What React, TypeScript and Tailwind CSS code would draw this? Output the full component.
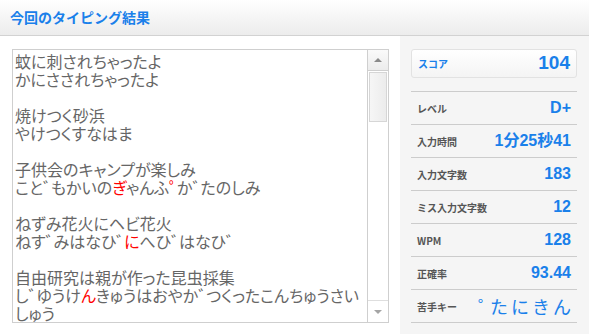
import React from 'react'

type Seg = { t: string; red?: boolean }

const lines: Seg[][] = [
  [{ t: '蚊に刺されちゃったよ' }],
  [{ t: 'かにさされちゃったよ' }],
  [],
  [{ t: '焼けつく砂浜' }],
  [{ t: 'やけつくすなはま' }],
  [],
  [{ t: '子供会のキャンプが楽しみ' }],
  [{ t: 'こと゛もかいの' }, { t: 'ぎ', red: true }, { t: 'ゃんふ' }, { t: '゜', red: true }, { t: 'か゛たのしみ' }],
  [],
  [{ t: 'ねずみ花火にヘビ花火' }],
  [{ t: 'ねす゛みはなひ゛' }, { t: 'に', red: true }, { t: 'へひ゛はなひ゛' }],
  [],
  [{ t: '自由研究は親が作った昆虫採集' }],
  [{ t: 'し゛ゆうけ' }, { t: 'ん', red: true }, { t: 'きゅうはおやか゛つくったこんちゅうさい' }],
  [{ t: 'しゅう' }],
]

const stats = [
  { label: 'レベル', value: 'D+' },
  { label: '入力時間', value: '1分25秒41' },
  { label: '入力文字数', value: '183' },
  { label: 'ミス入力文字数', value: '12' },
  { label: 'WPM', value: '128' },
  { label: '正確率', value: '93.44' },
]

// the spacing marks ゛ ゜ take far less room in the reference than a full cell
function Marks({ text }: { text: string }) {
  const parts = text.split(/([゛゜])/)
  return (
    <>
      {parts.map((p, i) =>
        p === '゛' || p === '゜' ? (
          <span key={i} className="-mr-[8px]">
            {p}
          </span>
        ) : (
          p
        )
      )}
    </>
  )
}

function Scrollbar() {
  return (
    <div className="flex w-[21px] flex-col border-l border-[#cfcfcf] bg-white">
      <div className="flex h-[21px] items-center justify-center border-b border-[#cfcfcf] bg-gradient-to-b from-[#fafafa] to-[#ececec]">
        <div className="h-0 w-0 border-x-[4px] border-b-[4px] border-x-transparent border-b-[#8a8a8a]" />
      </div>
      <div className="mx-[1px] mt-[1px] h-[50px] border border-[#d6d6d6] bg-gradient-to-r from-[#f6f6f6] to-[#ececec]" />
      <div className="flex-1" />
      <div className="flex h-[22px] items-center justify-center border-t border-[#dedede] bg-white">
        <div className="h-0 w-0 border-x-[4px] border-t-[4px] border-x-transparent border-t-[#a5a5a5]" />
      </div>
    </div>
  )
}

export default function App() {
  return (
    <div className="flex h-[334px] w-[589px] flex-col overflow-hidden bg-white font-['Liberation_Sans','Noto_Sans_CJK_JP',sans-serif]">
      {/* Header */}
      <div className="flex h-[36px] shrink-0 items-center border-b border-[#d2d2d2] bg-gradient-to-b from-white to-[#ececec] pl-[10px]">
        <h1 className="text-[14px] font-bold text-[#1a80ea] font-['Noto_Sans_CJK_JP',sans-serif]">今回のタイピング結果</h1>
      </div>

      <div className="flex flex-1">
        {/* Typed text */}
        <div className="w-[400px] pl-[12px] pt-[13px]">
          <div className="flex h-[274px] w-[377px] border border-[#cfcfcf]">
            <div className="flex-1 overflow-hidden pl-[2px] pt-[2px] text-[16px] leading-[18px] text-[#666] [font-feature-settings:'palt'] font-['Noto_Sans_CJK_JP',sans-serif]">
              {lines.map((segs, i) => (
                <div key={i} className="h-[18px] whitespace-pre">
                  {segs.map((s, j) => (
                    <span key={j} className={s.red ? 'text-[#f00]' : ''}>
                      <Marks text={s.t} />
                    </span>
                  ))}
                </div>
              ))}
            </div>
            <Scrollbar />
          </div>
        </div>

        {/* Stats */}
        <div className="flex-1 bg-[#f5f5f5] pl-[11px] pr-[12px] pt-[13px]">
          <div className="flex h-[29px] items-center justify-between rounded-[3px] border border-[#e2e2e2] bg-gradient-to-b from-white to-[#f4f4f4] pl-[6px] pr-[6px]">
            <span className="text-[10px] font-bold text-[#1a80ea] font-['Noto_Sans_CJK_JP',sans-serif]">スコア</span>
            <span className="text-[19px] font-bold text-[#1a80ea]">104</span>
          </div>
          <div className="mt-[13px] border-t border-[#cccccc]">
            {stats.map((s) => (
              <div key={s.label} className="flex h-[33px] items-center justify-between border-b border-[#cccccc] pl-[6px] pr-[6px]">
                <span className="text-[10px] font-bold text-[#555] font-['Noto_Sans_CJK_JP',sans-serif]">{s.label}</span>
                <span className="text-[16px] font-bold text-[#1a80ea]">{s.value}</span>
              </div>
            ))}
            <div className="flex h-[33px] items-center justify-between border-b border-[#cccccc] pl-[6px] pr-[6px]">
              <span className="text-[10px] font-bold text-[#555] font-['Noto_Sans_CJK_JP',sans-serif]">苦手キー</span>
              <span className="-mr-[3px] text-[18px] tracking-[3px] text-[#1a80ea] font-['Noto_Sans_CJK_JP',sans-serif]">
                <span className="-mr-[9px]">゜</span>たにきん
              </span>
            </div>
          </div>
        </div>
      </div>
    </div>
  )
}
